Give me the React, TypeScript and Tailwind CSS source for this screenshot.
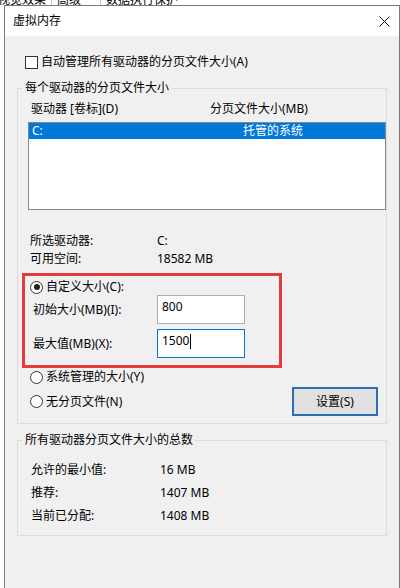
import React from "react";

function Radio({ checked }: { checked?: boolean }) {
  return (
    <span className="w-[13px] h-[13px] rounded-full border border-[#333333] bg-white flex items-center justify-center shrink-0">
      {checked && <span className="w-[6px] h-[6px] rounded-full bg-[#222222]" />}
    </span>
  );
}

export default function App() {
  return (
    <div className="w-[400px] h-[588px] bg-white overflow-hidden font-['Noto_Sans','Noto_Sans_CJK_SC',sans-serif] text-[12px] leading-[16px] text-black">
      {/* tab strip behind the dialog */}
      <div className="h-[5px] overflow-hidden">
        <div className="flex -mt-[8px] h-[20px]">
          <div className="ml-[-2px] w-[54px] border-r border-[#c8c8c8] whitespace-nowrap">视觉效果</div>
          <div className="w-[49px] pl-[5px] border-r border-[#c8c8c8] whitespace-nowrap">高级</div>
          <div className="pl-[5px] whitespace-nowrap">数据执行保护</div>
        </div>
      </div>

      {/* dialog */}
      <div className="ml-[4px] w-[396px] h-[583px] border-l border-t border-r border-[#7a7a7a] bg-[#f0f0f0] flex flex-col">
        {/* title bar */}
        <div className="h-[30px] bg-white flex items-center justify-between pl-[8px] pr-[9px]">
          <span className="text-[12px]">虚拟内存</span>
          <svg width="11" height="11" viewBox="0 0 11 11">
            <path d="M0.5 0.5 L10.5 10.5 M10.5 0.5 L0.5 10.5" stroke="#111" strokeWidth="1" fill="none" />
          </svg>
        </div>

        {/* body */}
        <div className="px-[12px] flex flex-col">
          <div className="mt-[19px] h-[14px] flex items-center ml-[8px]">
            <span className="w-[13px] h-[13px] border border-[#333333] bg-white shrink-0" />
            <span className="ml-[3px] whitespace-nowrap">自动管理所有驱动器的分页文件大小(A)</span>
          </div>

          {/* group 1 */}
          <fieldset className="mt-[11px] border border-[#dcdcdc] pb-[7px]">
            <legend className="ml-[5px] px-[2px] leading-[16px]">每个驱动器的分页文件大小</legend>
            <div className="mt-[5px] h-[16px] flex pl-[13px]">
              <span className="w-[179px] whitespace-nowrap">驱动器 [卷标](D)</span>
              <span className="whitespace-nowrap">分页文件大小(MB)</span>
            </div>
            <div className="mt-[5px] ml-[10px] w-[358px] h-[88px] border border-[#828790] bg-white">
              <div className="h-[16px] bg-[#0078d7] text-white flex items-center">
                <span className="pl-[3px] w-[214px]">C:</span>
                <span className="whitespace-nowrap">托管的系统</span>
              </div>
            </div>

            <div className="mt-[22px] h-[18px] flex items-center pl-[12px]">
              <span className="w-[127px]">所选驱动器:</span>
              <span>C:</span>
            </div>
            <div className="h-[18px] flex items-center pl-[12px]">
              <span className="w-[127px]">可用空间:</span>
              <span>18582 MB</span>
            </div>

            {/* red annotation box */}
            <div className="mt-[5px] ml-[4px] w-[260px] h-[95px] border-[3px] border-[#e53b3b] flex flex-col">
              <div className="mt-[3px] h-[16px] flex items-center pl-[5px]">
                <Radio checked />
                <span className="ml-[3px] whitespace-nowrap">自定义大小(C):</span>
              </div>
              <div className="h-[29px] flex items-center">
                <span className="pl-[8px] w-[132px] whitespace-nowrap">初始大小(MB)(I):</span>
                <div className="w-[88px] h-[29px] border border-[#adadad] bg-white pl-[4px] pt-[3px]">800</div>
              </div>
              <div className="mt-[5px] h-[29px] flex items-center">
                <span className="pl-[8px] w-[132px] whitespace-nowrap">最大值(MB)(X):</span>
                <div className="w-[88px] h-[29px] border border-[#0078d7] bg-white pl-[4px] pt-[3px] flex items-start">
                  <span>1500</span>
                  <span className="ml-[1px] mt-[1px] w-[1px] h-[15px] bg-black" />
                </div>
              </div>
            </div>

            <div className="mt-[1px] h-[16px] flex items-center pl-[12px]">
              <Radio />
              <span className="ml-[3px] whitespace-nowrap">系统管理的大小(Y)</span>
            </div>
            <div className="mt-[2px] h-[29px] flex items-center pl-[12px]">
              <Radio />
              <span className="ml-[3px] whitespace-nowrap">无分页文件(N)</span>
              <div className="ml-auto mr-[8px] w-[86px] h-[29px] border-2 border-[#2d6db3] bg-[#e1e1e1] flex items-center justify-center">
                设置(S)
              </div>
            </div>
          </fieldset>

          {/* group 2 */}
          <fieldset className="mt-[8px] border border-[#dcdcdc] pb-[11px]">
            <legend className="ml-[5px] px-[2px] leading-[16px]">所有驱动器分页文件大小的总数</legend>
            <div className="mt-[14px] h-[16px] flex items-center pl-[13px]">
              <span className="w-[129px]">允许的最小值:</span>
              <span>16 MB</span>
            </div>
            <div className="mt-[7px] h-[16px] flex items-center pl-[13px]">
              <span className="w-[129px]">推荐:</span>
              <span>1407 MB</span>
            </div>
            <div className="mt-[7px] h-[16px] flex items-center pl-[13px]">
              <span className="w-[129px]">当前已分配:</span>
              <span>1408 MB</span>
            </div>
          </fieldset>
        </div>
      </div>
    </div>
  );
}
